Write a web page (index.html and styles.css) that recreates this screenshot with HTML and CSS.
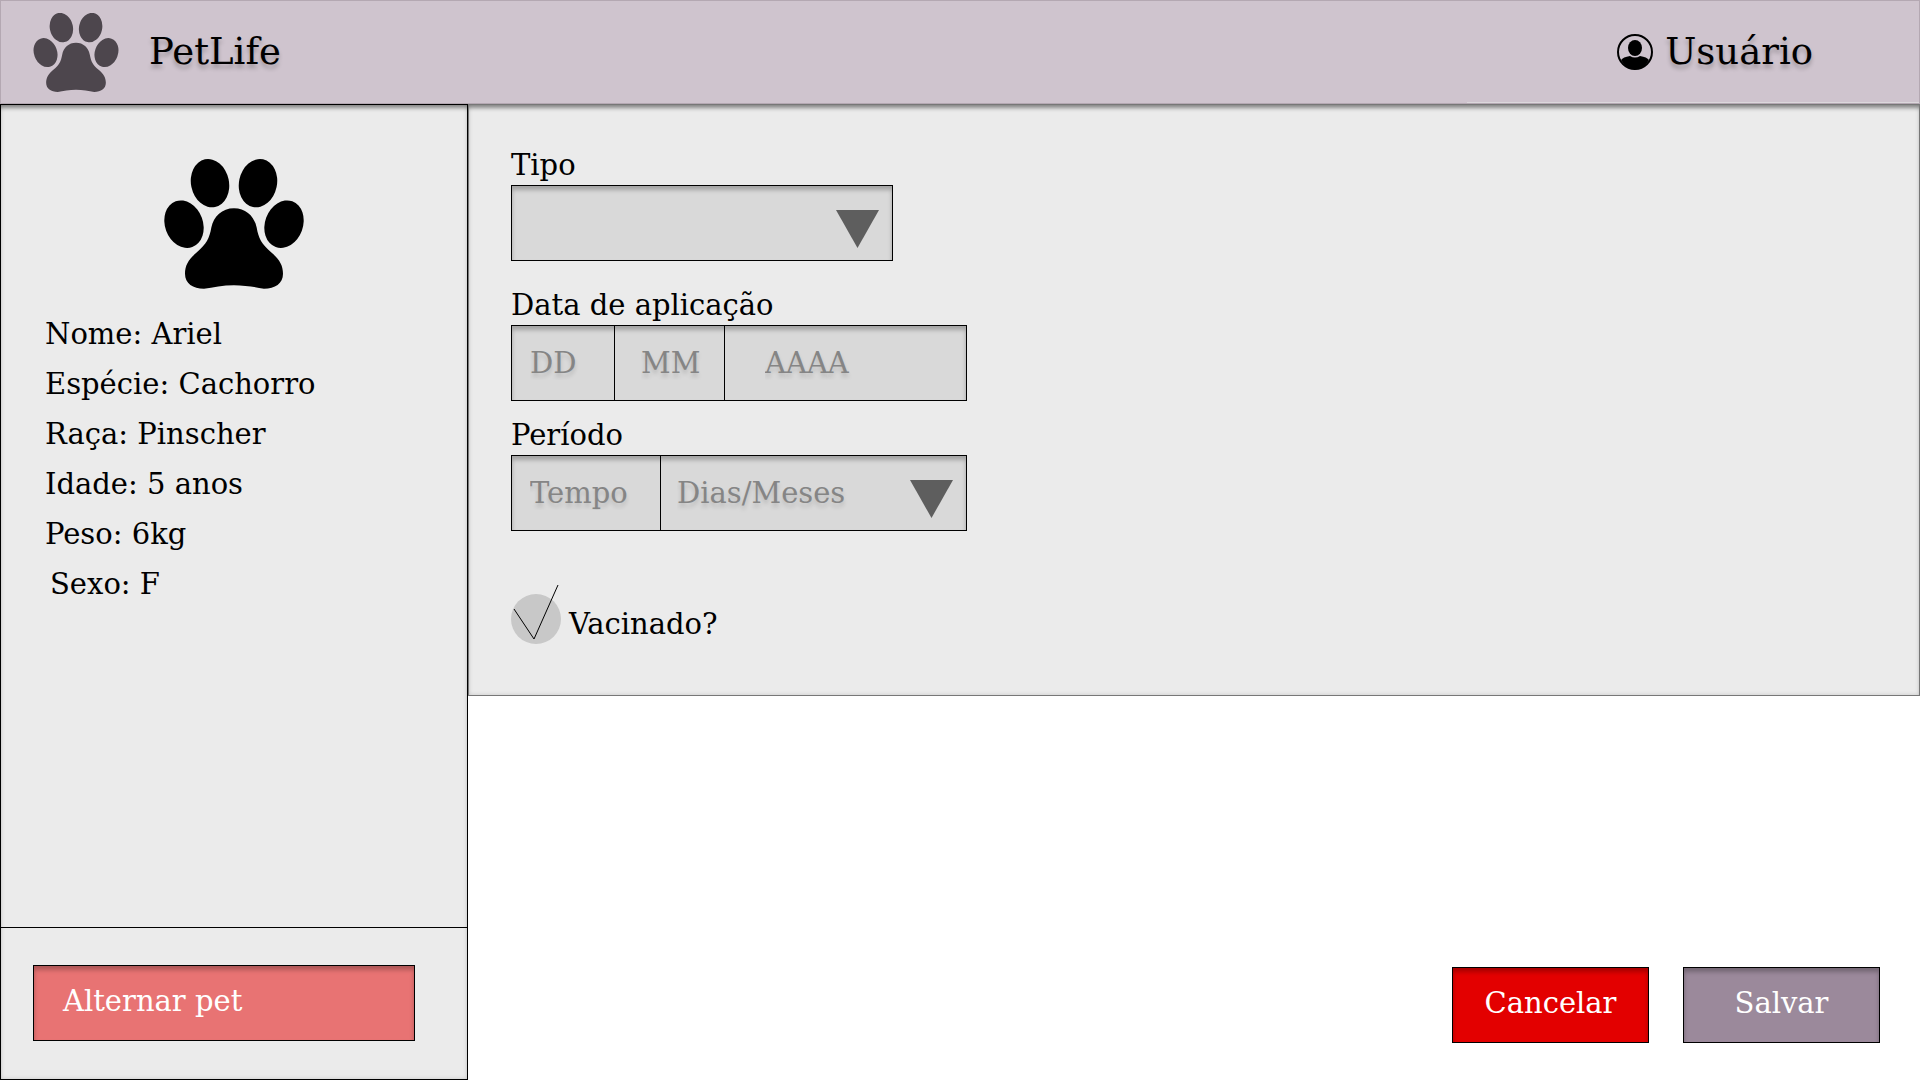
FILE: index.html
```html
<!DOCTYPE html>
<html lang="pt-BR">
<head>
<meta charset="utf-8">
<meta name="viewport" content="width=device-width, initial-scale=1">
<title>PetLife</title>
<link rel="stylesheet" href="styles.css">
</head>
<body>
<svg class="sprite" aria-hidden="true">
  <symbol id="paw" viewBox="72 57 420 389">
    <ellipse cx="210" cy="129" rx="57" ry="73" transform="rotate(-12 210 129)"/>
    <ellipse cx="354" cy="129" rx="57" ry="73" transform="rotate(12 354 129)"/>
    <ellipse cx="132" cy="252" rx="57" ry="73" transform="rotate(-20 132 252)"/>
    <ellipse cx="432" cy="252" rx="57" ry="73" transform="rotate(20 432 252)"/>
    <path d="M282 204C318 204 343 228 350 262C356 295 364 311 395 338C418 358 429 375 429 401C429 430 405 446 372 446C345 441 315 435 282 435C249 435 219 441 192 446C159 446 135 430 135 401C135 375 146 358 169 338C200 311 208 295 214 262C221 228 246 204 282 204Z"/>
  </symbol>
</svg>
<header class="topbar">
  <a class="brand" href="#">
    <svg class="brand-logo" aria-hidden="true"><use href="#paw"/></svg>
    <span>PetLife</span>
  </a>
  <a class="user" href="#">
    <svg class="user-icon" viewBox="0 0 36 36" aria-hidden="true">
      <circle cx="18" cy="18" r="17" fill="none" stroke="currentColor" stroke-width="2"/>
      <ellipse cx="18" cy="14" rx="7" ry="8"/>
      <path d="M4 26Q6 23 13 22Q18 25 23 22Q30 23 32 26Q27 35 18 35.500Q9 35 4 26Z"/>
    </svg>
    <span>Usuário</span>
  </a>
</header>
<div class="layout">
  <aside class="sidebar">
    <svg class="pet-photo" aria-hidden="true"><use href="#paw"/></svg>
    <ul class="pet-info">
      <li>Nome: Ariel</li>
      <li>Espécie: Cachorro</li>
      <li>Raça: Pinscher</li>
      <li>Idade: 5 anos</li>
      <li>Peso: 6kg</li>
      <li class="indented">Sexo: F</li>
    </ul>
    <div class="sidebar-footer">
      <button class="button button-switch" type="button">Alternar pet</button>
    </div>
  </aside>
  <main class="content">
    <form class="form" id="vaccine">
      <div class="field">
        <label for="type">Tipo</label>
        <div class="group group-short">
          <select id="type" class="control"><option></option></select>
          <svg class="arrow" viewBox="0 0 43 38" aria-hidden="true"><path d="M0 0H43L21.500 38Z"/></svg>
        </div>
      </div>
      <div class="field">
        <label for="day">Data de aplicação</label>
        <div class="group">
          <input id="day" class="control day" placeholder="DD">
          <input class="control month" placeholder="MM" aria-label="Mês">
          <input class="control year" placeholder="AAAA" aria-label="Ano">
        </div>
      </div>
      <div class="field">
        <label for="time">Período</label>
        <div class="group">
          <input id="time" class="control time" placeholder="Tempo">
          <select class="control unit" aria-label="Unidade"><option>Dias/Meses</option></select>
          <svg class="arrow" viewBox="0 0 43 38" aria-hidden="true"><path d="M0 0H43L21.500 38Z"/></svg>
        </div>
      </div>
      <div class="check">
        <span class="check-box">
          <input id="vaccinated" type="checkbox" checked>
          <svg class="check-mark" viewBox="0 0 50 60" aria-hidden="true"><path d="M3 25L23 55L47 1"/></svg>
        </span>
        <label for="vaccinated">Vacinado?</label>
      </div>
    </form>
    <div class="actions">
      <button class="button button-cancel" type="reset" form="vaccine">Cancelar</button>
      <button class="button button-save" type="submit" form="vaccine">Salvar</button>
    </div>
  </main>
</div>
</body>
</html>
```
FILE: styles.css
```css
* { box-sizing: border-box; }

body {
  margin: 0;
  min-height: 100vh;
  display: flex;
  flex-direction: column;
  background: #fff;
  color: #000;
  font-family: "DejaVu Serif", serif;
  font-size: 29px;
  line-height: 40px;
}

.sprite { display: none; }

.topbar {
  display: flex;
  justify-content: space-between;
  align-items: center;
  height: 104px;
  padding: 0 106px 0 32px;
  border: 1px solid #b4a8b2;
  background: linear-gradient(#dcd8dc, #dcd8dc) right bottom / 452px 1px no-repeat #cfc4ce;
}

.brand,
.user {
  display: flex;
  align-items: center;
  color: inherit;
  font-size: 37px;
  text-decoration: none;
  text-shadow: 0 4px 4px rgba(0, 0, 0, 0.25);
}

.brand { gap: 30px; }
.user { gap: 12px; }

.brand-logo {
  width: 86px;
  height: 79px;
  fill: #4d464d;
}

.user-icon {
  width: 36px;
  height: 36px;
}

.layout {
  flex: 1;
  display: grid;
  grid-template-columns: 468px 1fr;
}

.sidebar {
  display: flex;
  flex-direction: column;
  border: 1px solid #000;
  background: #ebebeb;
  box-shadow: inset 0 6px 4px -3px rgba(0, 0, 0, 0.4), inset 0 0 4px rgba(0, 0, 0, 0.15);
}

.pet-photo {
  width: 140px;
  height: 130px;
  margin: 54px auto 20px;
}

.pet-info {
  margin: 0;
  padding: 0 44px;
  list-style: none;
  line-height: 50px;
}

.indented { padding-left: 5px; }

.sidebar-footer {
  margin-top: auto;
  padding: 37px 52px 38px 32px;
  border-top: 1px solid #000;
}

.content {
  display: flex;
  flex-direction: column;
  justify-content: space-between;
}

.form {
  padding: 40px 42px 51px;
  border: 1px solid #777;
  background: #ebebeb;
  box-shadow: inset 0 6px 4px -3px rgba(0, 0, 0, 0.4), inset 0 0 4px rgba(0, 0, 0, 0.15);
}

.field label,
.check label { display: block; }

.field + .field { margin-top: 14px; }
.field:first-child { margin-bottom: 24px; }

.group {
  position: relative;
  display: flex;
  width: 456px;
  max-width: 100%;
  height: 76px;
  border: 1px solid #000;
  background: #d9d9d9;
  box-shadow: inset 0 4px 4px rgba(0, 0, 0, 0.25);
}

.group-short { width: 382px; }

.control {
  flex: 1;
  min-width: 0;
  margin: 0;
  padding: 0 18px;
  border: 0;
  border-radius: 0;
  background: transparent;
  color: #858585;
  font: inherit;
  text-shadow: 0 4px 4px rgba(0, 0, 0, 0.15);
  appearance: none;
}

.control::placeholder {
  color: #858585;
  opacity: 1;
}

.control + .control { border-left: 1px solid #000; }

.day { flex: 0 0 102px; }
.month { flex: 0 0 110px; padding: 0 8px 0 26px; }
.year { padding-left: 40px; }
.time { flex: 0 0 148px; }
.unit { padding-left: 16px; }

.arrow {
  position: absolute;
  top: 24px;
  right: 13px;
  width: 43px;
  height: 38px;
  fill: #5e5e5e;
  pointer-events: none;
}

.check {
  display: flex;
  align-items: flex-end;
  gap: 8px;
  margin-top: 63px;
}

.check-box {
  position: relative;
  display: flex;
}

.check-box input {
  width: 50px;
  height: 50px;
  margin: 0;
  border-radius: 50%;
  background: #c8c8c8;
  appearance: none;
}

.check-mark {
  position: absolute;
  left: 0;
  bottom: 0;
  width: 50px;
  height: 60px;
  fill: none;
  stroke: #000;
  pointer-events: none;
}

.actions {
  display: flex;
  justify-content: flex-end;
  gap: 34px;
  padding: 37px 40px;
}

.button {
  width: 197px;
  height: 76px;
  padding: 0 0 4px;
  border: 1px solid #000;
  color: #fff;
  font: inherit;
  box-shadow: inset 0 4px 4px rgba(0, 0, 0, 0.25);
}

.button-switch {
  width: 100%;
  padding-left: 29px;
  background: #e87373;
  text-align: left;
}

.button-cancel { background: #e30000; }
.button-save { background: #9b899b; }
```
